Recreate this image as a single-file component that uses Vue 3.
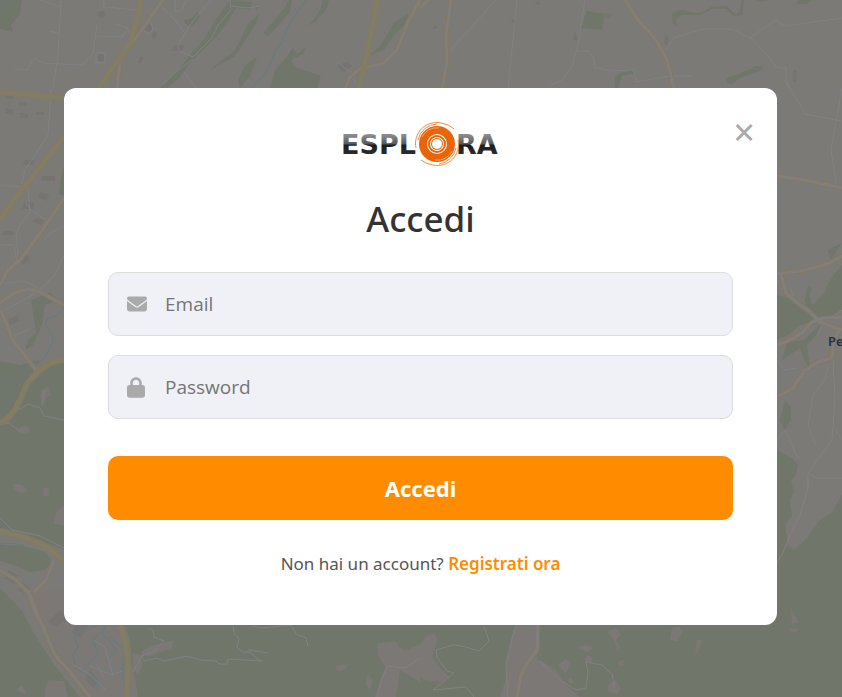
<template>
  <div class="page">
    <!-- Map behind the dialog, already in its dimmed colours -->
    <svg
      class="map"
      viewBox="0 0 842 697"
      preserveAspectRatio="xMidYMid slice"
      aria-hidden="true"
    >
      <path v-for="(d, i) in woods" :key="'w' + i" :d="d" class="wood" />
      <path v-for="(d, i) in clearings" :key="'c' + i" :d="d" class="land" />
      <path v-for="(d, i) in buildings" :key="'b' + i" :d="d" class="building" />
      <path v-for="(d, i) in rivers" :key="'r' + i" :d="d" class="river" />
      <path v-for="(d, i) in lanes" :key="'l' + i" :d="d" class="lane" />
      <path v-for="(d, i) in roads" :key="'re' + i" :d="d" class="road-edge" />
      <path v-for="(d, i) in roads" :key="'rf' + i" :d="d" class="road" />
      <path v-for="(d, i) in highways" :key="'he' + i" :d="d" class="highway-edge" />
      <path v-for="(d, i) in highways" :key="'hf' + i" :d="d" class="highway" />
      <text x="828" y="346" class="place">Pe</text>
    </svg>

    <main class="overlay">
      <section class="modal" role="dialog" aria-labelledby="login-title">
        <button class="close" type="button" aria-label="Chiudi">×</button>

        <svg class="logo" viewBox="0 0 160 46" role="img" aria-label="Esplora">
          <defs>
            <linearGradient id="metal" gradientUnits="userSpaceOnUse" x1="0" y1="14" x2="0" y2="33">
              <stop offset="0" stop-color="#8c8c8c" />
              <stop offset="0.45" stop-color="#5a5a5a" />
              <stop offset="0.55" stop-color="#1c1c1c" />
              <stop offset="1" stop-color="#2c2c2c" />
            </linearGradient>
          </defs>
          <text x="0" y="33" class="logo-text">ESPL</text>
          <text x="115" y="33" class="logo-text">RA</text>
          <g transform="translate(96 23)">
            <circle r="20" fill="#fff" />
            <circle r="18" fill="#ea6509" />
            <g class="swirl">
              <path d="M-21 4A21 21 0 0 1 4-21Q12-20 17-15" />
              <path d="M-19-4A20 20 0 0 1 0-20" />
              <path d="M21-4A21 21 0 0 1-4 21Q-11 20-16 16" />
              <path d="M19 4A20 20 0 0 1 2 20" />
            </g>
            <g class="swirl-gap">
              <path d="M-15-7A16 16 0 0 1 2-16" />
              <path d="M15 7A16 16 0 0 1-2 16" />
            </g>
            <circle r="10" fill="#fff" />
            <circle r="9" fill="#ea6509" />
            <circle r="7" fill="#fff" />
            <circle r="6" fill="#ea6509" />
            <circle r="5" fill="#fff" />
          </g>
        </svg>

        <h1 id="login-title">Accedi</h1>

        <form @submit.prevent>
          <div class="field">
            <label for="email" aria-label="Email">
              <svg class="icon" viewBox="0 0 512 512" aria-hidden="true">
                <path
                  d="M48 64C21.500 64 0 85.500 0 112c0 15.100 7.100 29.300 19.200 38.400L236.800 313.600c11.400 8.500 27 8.500 38.400 0L492.800 150.400c12.100-9.100 19.200-23.300 19.200-38.400c0-26.500-21.500-48-48-48H48zM0 176V384c0 35.300 28.700 64 64 64H448c35.300 0 64-28.700 64-64V176L294.400 339.200c-22.800 17.100-54 17.100-76.800 0L0 176z"
                />
              </svg>
            </label>
            <input id="email" v-model="email" type="email" placeholder="Email" />
          </div>

          <div class="field">
            <label for="password" aria-label="Password">
              <svg class="icon lock" viewBox="0 0 448 512" aria-hidden="true">
                <path
                  d="M144 144v48H304V144c0-44.200-35.800-80-80-80s-80 35.800-80 80zM80 192V144C80 64.500 144.500 0 224 0s144 64.500 144 144v48h16c35.300 0 64 28.700 64 64V448c0 35.300-28.700 64-64 64H64c-35.300 0-64-28.700-64-64V256c0-35.300 28.700-64 64-64H80z"
                />
              </svg>
            </label>
            <input id="password" v-model="password" type="password" placeholder="Password" />
          </div>

          <button class="submit" type="submit">Accedi</button>
        </form>

        <p class="register">Non hai un account? <a href="#">Registrati ora</a></p>
      </section>
    </main>
  </div>
</template>

<script setup>
import { ref } from "vue";

const email = ref("");
const password = ref("");

// Wooded areas
const woods = [
  "M0 0H22L20 14L11 25L13 32L0 29Z",
  "M184 20L192 18L197 12L200 17L196 22L191 27L186 24Z",
  "M230 0L252 2L250 10L236 8L228 22L217 36L205 48L192 60L180 77L167 88H160L180 68L190 55L205 38L215 20Z",
  "M259 14L248 24L238 45L233 52L222 60L210 70L218 66L235 56L247 38L257 22Z",
  "M289 0L284 9L275 19L263 33L268 36L278 26L290 12L292 0Z",
  "M257 57L245 65L238 80L240 88L250 76Z",
  "M323 0L320 10L311 23L306 26L315 22L326 10L329 0Z",
  "M270 88L275 70L287 57L293 47L297 54L306 47L303 54L291 60L295 67L321 76L317 88Z",
  "M408 13L394 23L381 45L370 55L384 50L395 34L410 20Z",
  "M587 11L605 14L602 30L580 28Z",
  "M672 14Q680 7 690 12Q700 15 711 7L727 6L735 14L740 12L742 0H744L742 15L734 16L726 9L712 9L700 15H682L676 20L677 27L673 24Z",
  "M756 0H770L762 2ZM798 0H812L806 4L796 4Z",
  "M726 78L751 69L754 66H763L762 70L738 79L733 84L726 83Z",
  "M615 88V77L620 73L632 70L634 73L622 76L618 88Z",
  "M64 152V195H59L61 178L64 165ZM31 300L46 297L42 325L33 345L25 350L28 340L36 333ZM32 300L50 292L58 300L45 305Z",
  "M0 361L20 365L40 360L30 376L15 405L0 424V360Z",
  "M64 361Q45 362 30 378Q22 400 8 424L0 425V528Q20 532 40 540L64 550V361Z",
  "M0 545Q28 545 45 552L52 562L45 570L30 572L0 560Z",
  "M0 588Q15 604 23 612L33 632L55 666L80 697H0Z",
  "M115 600H842V697H126Q134 670 130 640Z",
  "M777 295L795 300L812 308L818 320L800 325L788 335L777 340Z",
  "M842 265Q828 280 825 292L805 314L814 325L830 316L842 310Z",
  "M777 450L792 458L798 465L796 475L791 480L794 492L790 500L792 515L785 525L788 545L794 550L805 540L820 520L842 505V625H777Z",
  "M842 495L833 510L828 530L842 535ZM842 243L828 250L831 260Z",
  "M787 342L804 340L822 322L816 335L807 345L810 370L804 360L800 348L782 360ZM785 400L791 407V420L785 430L780 420Z",
  "M805 300L808 285L812 288L809 296L815 310L808 313Z",
];

// Open ground inside the woods
const clearings = [
  "M42 390L48 386L52 395L46 398L43 405L40 396Z",
  "M18 429Q26 422 30 431Q22 436 16 430Z",
  "M13 484L22 485L28 490L22 493L14 490Z",
  "M44 488L49 487L48 497L43 495Z",
  "M64 505Q53 512 54 524L64 526Z",
  "M22 590H112Q130 632 129 655L134 670L138 697H85L60 665L48 655L52 648L40 620L32 612Z",
  "M132 652L140 655L143 665L138 674L133 670Z",
  "M140 652L155 645L174 640L172 648L160 652L148 657Z",
  "M45 690L48 680L64 681L68 697H45Z",
  "M17 690L21 685L27 692L24 694Z",
  "M378 643L395 641L402 650L407 650L420 644V682L400 670L396 697H375L385 667L378 655Z",
  "M367 674L373 680L370 690L366 685Z",
  "M335 666L349 664L344 670L337 671Z",
  "M420 645Q425 634 434 634Q440 638 434 650L432 657L440 668L450 678L440 682L425 680L420 676Z",
  "M515 624H539L536 650L538 661L558 676L560 697H500L507 675L505 660L511 643Z",
  "M540 660L556 670L566 685L580 697H558L540 685L520 683Z",
  "M558 665L566 659L571 665L565 673Z",
  "M576 648L584 645L594 647L588 652Z",
  "M607 632L616 628L621 634L616 640L620 647L617 650L614 640Z",
  "M608 685L616 680L621 690L616 694L608 691Z",
  "M672 628L679 626L682 632L678 642L670 640Z",
  "M697 639L702 640L699 650L695 656Z",
  "M791 609L799 622L792 624ZM790 628L799 629L795 633L789 631Z",
  "M587 655L593 658L591 664L585 661ZM569 677L574 680L572 684L568 682ZM619 661L624 660L623 666L619 665Z",
];

const buildings = [
  "M6 96H13V99H6ZM19 102H27V106H19ZM5 108L13 110V115L5 113ZM20 113L28 114V118H20ZM36 112H44V115H36Z",
  "M25 160H35L33 165H23ZM43 176H55V181H41ZM40 192L49 195L47 201L38 197ZM24 202H34V209H22Z",
  "M4 231H13V235H3ZM35 218L44 220L41 225L33 222ZM20 260L28 255L30 261L22 265ZM8 320L18 315L20 321L10 325Z",
  "M98 54H104V61H98ZM148 23L154 27L149 33L144 29ZM154 31L158 34L154 39L151 36Z",
  "M140 56L144 58L140 64L138 62ZM174 45L184 46L182 51H172ZM337 65L348 62L352 66L343 73ZM253 5L260 6L257 10Z",
  "M98 14A3.500 3.500 0 1 1 98 15Z",
  "M60 610L67 618L57 626L48 622ZM80 620L88 626L80 638L72 632ZM90 670L98 680L94 688L85 680Z",
  "M8 570L18 575L14 584L5 578ZM22 582L30 588L26 594L18 590Z",
  "M606 14L612 13L609 19L605 18ZM575 31L578 40L573 40ZM665 35L669 38L667 46L664 43ZM793 70H797L796 82H793Z",
  "M435 25L438 28L433 29ZM512 19L516 20L515 23L511 22ZM535 2H540V5H536Z",
];

const rivers = [
  "M306 0L297 13L291 22L286 30L283 41L276 50L272 60L266 72L252 88",
  "M64 309L56 316L48 318L45 324L52 335L53 341L46 356L36 366L26 367L23 378L14 386L0 377",
  "M14 386L13 400L0 411",
  "M0 544Q16 541 30 549L45 554L54 562",
  "M98 624L74 637L78 646L73 656L76 668L96 680L98 690",
  "M100 632L93 640L98 655L82 670",
  "M106 625L102 634L110 641L116 650L106 662M110 637L125 650L122 672L126 697",
  "M2 0V10",
];

const lanes = [
  "M61 0L58 55L53 88",
  "M14 69L27 70L34 58L43 63L82 65L93 54L97 25",
  "M40 0L60 7M49 31L58 33M104 0V7L137 10",
  "M96 36L122 37L128 28L115 24M96 55V63H105V53H96",
  "M128 32H131M150 19L153 29L149 34L143 30",
  "M161 6L175 20L184 32",
  "M175 0V12L182 10L186 0",
  "M211 0L192 22L178 45L179 51L193 57L211 39L218 25L231 10L230 0M231 6L248 8L260 6",
  "M193 59L177 71L163 84M184 72L196 88",
  "M496 0L448 53M517 0L508 88M585 0L578 45L572 66L562 80L550 86",
  "M577 51H588L594 58V67L610 71L634 70L636 82L670 76H692",
  "M666 50L674 38L690 33L703 29H732L750 38L775 20L785 26L842 18",
  "M750 37L765 53L778 68H786V78L790 88",
  "M784 80L792 92L802 108L805 114L842 121M842 88L831 150L837 190",
  "M337 62L351 73L358 88",
  "M51 90L48 135L38 150L25 170L22 184",
  "M0 185L22 187L28 188L30 212L20 225L16 235L18 255",
  "M0 245H14L17 262M25 202L31 210L44 219L49 218",
  "M5 283L24 281L36 287L40 290",
  "M0 313L32 295L45 285L55 275L64 255",
  "M64 226L50 233L44 240M10 338L30 329",
  "M36 365L34 368M44 390L42 405M6 421L14 427L18 429",
  "M18 410L28 404L40 408L44 416L64 420",
  "M0 518L12 530L40 536L52 542L64 548",
  "M148 628L153 630L154 637L164 641L155 651L142 656L144 661L156 658L164 661L187 656L200 660L216 661L219 664H227L228 659L263 661",
  "M233 624L234 634L239 638L237 647L242 652H250L261 662M249 650L268 653",
  "M251 626L262 628L291 625L296 634L306 638L308 647",
  "M94 640L105 647L110 665L113 675M90 666L112 675L122 671M74 665L90 675L106 690M98 666L104 678",
  "M133 672L143 654M377 697L382 678L388 666L405 668L420 658",
  "M483 625L486 632L489 641L479 651L462 646L453 645L436 650L437 657L447 671L454 673L433 690L466 687L474 697",
  "M514 630L506 665L508 697",
  "M539 661L560 680L576 690L586 688L588 672L586 662L602 665L612 674L614 688",
  "M790 288L795 300L810 315L820 325M842 310L824 323L818 335",
  "M777 360L785 370L795 368M777 440L785 430L798 458",
  "M828 366L826 378L813 395L808 425L816 445M808 475L808 488L800 515L790 535L782 555L777 562",
  "M808 473L816 478H842M836 430L842 440M808 473L832 440L835 400L833 360",
];

const roads = [
  "M163 0L133 42L120 60L117 88",
  "M0 285L8 270L20 260L41 232L64 198",
  "M0 303L14 293L28 289L40 292L64 305",
  "M0 310L6 322L12 339L36 370",
  "M420 8L432 -4M451 0L446 35L447 60L442 90",
  "M420 0L408 22L397 50L383 64L361 68L350 77L345 90",
  "M625 0L638 20L656 40L667 60L674 88",
  "M777 176L805 180L842 188",
  "M777 274L805 270L828 264L842 256",
  "M780 272L784 285L786 293L800 305L810 312L820 322L842 330",
  "M777 345L790 340L802 333L812 322L824 318L842 317",
  "M777 397L793 388L804 371L818 362L832 358L834 340L840 329",
  "M0 570L16 580L30 595L40 620L55 655L70 672L90 697",
  "M28 590L34 610L45 630",
  "M54 560L46 580L34 592",
  "M538 624L537 650L525 666L521 675L517 697",
];

const highways = [
  "M141 -2L139 15L133 32L130 43L120 57L99 88",
  "M0 92L64 98",
  "M0 219L20 192L43 164L64 136",
  "M0 423Q12 418 20 400L28 382L40 370Q51 361 64 360",
  "M0 531Q28 537 47 547L68 563L95 590Q118 614 125 640L128 660L127 697",
  "M378 -2L368 50L359 88",
];
</script>

<style>
body {
  margin: 0;
}
</style>

<style scoped>
.page {
  position: relative;
  min-height: 100vh;
  overflow: hidden;
  background: #7c7a76;
  font-family: "Noto Sans", sans-serif;
}

/* Map */
.map {
  position: absolute;
  inset: 0;
  width: 100%;
  height: 100%;
  fill: none;
  stroke-linejoin: round;
}

.wood {
  fill: #71766a;
}

.land {
  fill: #7b7875;
}

.building {
  fill: #767370;
}

.river {
  stroke: #647b80;
  stroke-width: 1;
}

.lane {
  stroke: #828184;
  stroke-width: 1;
}

.road-edge {
  stroke: #85785f;
  stroke-width: 5;
}

.road {
  stroke: #817f7d;
  stroke-width: 3;
}

.highway-edge {
  stroke: #87795f;
  stroke-width: 6;
}

.highway {
  stroke: #807e66;
  stroke-width: 4;
}

.place {
  fill: #263247;
  font-size: 13px;
  font-weight: 600;
}

/* Dialog */
.overlay {
  position: relative;
  display: flex;
  align-items: center;
  justify-content: center;
  box-sizing: border-box;
  min-height: 100vh;
  padding: 16px 65px 0 64px;
}

.modal {
  position: relative;
  display: flex;
  flex-direction: column;
  box-sizing: border-box;
  width: 100%;
  max-width: 800px;
  padding: 33px 44px 47px;
  border-radius: 12px;
  background: #fff;
  text-align: center;
}

.close {
  position: absolute;
  top: 23px;
  right: 13px;
  width: 40px;
  height: 40px;
  padding: 0;
  border: 0;
  background: none;
  color: #aaa;
  font-family: inherit;
  font-size: 38px;
  line-height: 40px;
  cursor: pointer;
}

.logo {
  align-self: center;
  width: 160px;
  height: 46px;
}

.logo-text {
  fill: url(#metal);
  font-family: "DejaVu Sans", sans-serif;
  font-size: 27px;
  font-weight: 700;
}

.swirl {
  fill: none;
  stroke: #ee8a45;
  stroke-width: 1;
}

.swirl-gap {
  fill: none;
  stroke: #f5a56b;
  stroke-width: 1;
}

h1 {
  margin: 28px 0 29px;
  color: #333;
  font-size: 35px;
  font-weight: 500;
  line-height: 48px;
}

form {
  display: flex;
  flex-direction: column;
}

.field {
  display: flex;
  align-items: center;
  box-sizing: border-box;
  height: 64px;
  margin-bottom: 19px;
  padding-left: 18px;
  border: 1px solid #ddd;
  border-radius: 10px;
  background: #f0f1f6;
}

.field label {
  display: flex;
  width: 38px;
}

.icon {
  width: 20px;
  height: 20px;
  fill: #aaa;
}

.lock {
  width: 18px;
  height: 21px;
}

.field input {
  flex: 1;
  min-width: 0;
  height: 100%;
  padding: 0;
  border: 0;
  outline: 0;
  background: none;
  color: #333;
  font-family: "Open Sans", sans-serif;
  font-size: 19px;
}

.field input::placeholder {
  color: #757575;
}

.submit {
  height: 64px;
  margin-top: 18px;
  border: 0;
  border-radius: 10px;
  background: #ff8c00;
  color: #fff;
  font-family: inherit;
  font-size: 22px;
  font-weight: 700;
  cursor: pointer;
}

.register {
  margin: 30px 0 0;
  color: #555;
  font-size: 17px;
  line-height: 28px;
}

.register a {
  color: #ff8c00;
  font-weight: 600;
  text-decoration: none;
}
</style>
